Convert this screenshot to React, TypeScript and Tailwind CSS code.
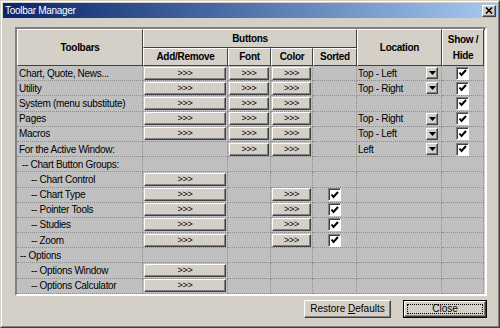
import React from 'react';

type Row = {
  name: string;
  pad: string;
  ar?: boolean;
  font?: boolean;
  color?: boolean;
  sorted?: boolean;
  loc?: string;
  show?: boolean;
};

const rows: Row[] = [
  { name: 'Chart, Quote, News...', pad: 'pl-[2px]', ar: true, font: true, color: true, loc: 'Top - Left', show: true },
  { name: 'Utility', pad: 'pl-[2px]', ar: true, font: true, color: true, loc: 'Top - Right', show: true },
  { name: 'System (menu substitute)', pad: 'pl-[2px]', ar: true, font: true, color: true, show: true },
  { name: 'Pages', pad: 'pl-[2px]', ar: true, font: true, color: true, loc: 'Top - Right', show: true },
  { name: 'Macros', pad: 'pl-[2px]', ar: true, font: true, color: true, loc: 'Top - Left', show: true },
  { name: 'For the Active Window:', pad: 'pl-[2px]', font: true, color: true, loc: 'Left', show: true },
  { name: '-- Chart Button Groups:', pad: 'pl-[5px]' },
  { name: '-- Chart Control', pad: 'pl-[14px]', ar: true },
  { name: '-- Chart Type', pad: 'pl-[14px]', ar: true, color: true, sorted: true },
  { name: '-- Pointer Tools', pad: 'pl-[14px]', ar: true, color: true, sorted: true },
  { name: '-- Studies', pad: 'pl-[14px]', ar: true, color: true, sorted: true },
  { name: '-- Zoom', pad: 'pl-[14px]', ar: true, color: true, sorted: true },
  { name: '-- Options', pad: 'pl-[3px]' },
  { name: '-- Options Window', pad: 'pl-[14px]', ar: true },
  { name: '-- Options Calculator', pad: 'pl-[14px]', ar: true },
];

const head =
  'flex items-center justify-center text-center bg-[#d4d0c8] border border-t-white border-l-white border-r-[#404040] border-b-[#404040] font-bold text-[10px] leading-[16px]';
const cell = 'flex items-center min-w-0 bg-[#c0c0c0] border-r border-b border-dotted border-[#8c8c8c]';
const raised =
  'bg-[#d4d0c8] border border-t-white border-l-white border-r-[#404040] border-b-[#404040] shadow-[inset_-1px_-1px_0_#808080]';

function Go() {
  return (
    <div className={`${raised} mx-px flex h-[13px] flex-1 items-center justify-center text-[9px] leading-none`}>
      &gt;&gt;&gt;
    </div>
  );
}

function Check() {
  return (
    <div className="mx-auto flex h-[13px] w-[13px] items-center justify-center border border-t-[#808080] border-l-[#808080] border-r-white border-b-white bg-white shadow-[inset_1px_1px_0_#404040]">
      <svg width="9" height="8" viewBox="0 0 9 8">
        <polyline points="1.5,3.5 3.5,6 8,1" fill="none" stroke="#000" strokeWidth="2" />
      </svg>
    </div>
  );
}

function Drop({ text }: { text: string }) {
  return (
    <>
      <span className="flex-1 truncate pl-[1px]">{text}</span>
      <div className={`${raised} mr-[3px] flex h-[12px] w-[12px] items-center justify-center`}>
        <svg width="7" height="4" viewBox="0 0 7 4">
          <polygon points="0,0 7,0 3.5,4" fill="#000" />
        </svg>
      </div>
    </>
  );
}

export default function App() {
  return (
    <div className="h-[328px] w-[500px] border border-t-[#d4d0c8] border-l-[#d4d0c8] border-r-[#404040] border-b-[#404040] bg-[#d4d0c8] font-['Liberation_Sans',Arial,sans-serif] text-black">
      <div className="flex h-full flex-col border border-t-white border-l-white border-r-[#808080] border-b-[#808080] p-px">
        {/* Title bar */}
        <div className="flex h-[15px] items-center justify-between bg-linear-to-r from-[#0a246a] to-[#a6caf0] pl-[2px] pr-[1px]">
          <span className="text-[10px] tracking-[-0.3px] text-white">Toolbar Manager</span>
          <div className={`${raised} flex h-[12px] w-[14px] items-center justify-center`}>
            <svg width="8" height="7" viewBox="0 0 8 7">
              <path d="M1 0.5 L7 6.5 M7 0.5 L1 6.5" stroke="#000" strokeWidth="1.6" />
            </svg>
          </div>
        </div>

        {/* Body */}
        <div className="flex flex-1 flex-col pl-[12px] pr-[10px] pt-[9px]">
          <div className="border-2 border-t-[#808080] border-l-[#808080] border-r-white border-b-white shadow-[inset_1px_1px_0_#404040,inset_-1px_-1px_0_#d4d0c8]">
            <div className="grid grid-cols-[126px_85px_43px_42px_44px_85px_42px] grid-rows-[19px_18px_repeat(15,15.2px)] text-[10px] tracking-[-0.3px]">
              <div className={`${head} row-span-2`}>Toolbars</div>
              <div className={`${head} col-span-4`}>Buttons</div>
              <div className={`${head} row-span-2`}>Location</div>
              <div className={`${head} row-span-2 leading-[12px]`}>
                Show /
                <br />
                Hide
              </div>
              <div className={head}>Add/Remove</div>
              <div className={head}>Font</div>
              <div className={head}>Color</div>
              <div className={head}>Sorted</div>

              {rows.map((r) => (
                <React.Fragment key={r.name}>
                  <div className={`${cell} ${r.pad} whitespace-nowrap`}>{r.name}</div>
                  <div className={cell}>{r.ar && <Go />}</div>
                  <div className={cell}>{r.font && <Go />}</div>
                  <div className={cell}>{r.color && <Go />}</div>
                  <div className={cell}>{r.sorted && <Check />}</div>
                  <div className={cell}>{r.loc && <Drop text={r.loc} />}</div>
                  <div className={cell}>{r.show && <Check />}</div>
                </React.Fragment>
              ))}
            </div>
          </div>

          {/* Footer buttons */}
          <div className="mt-[4px] flex justify-end gap-[12px] text-[10px]">
            <div className={`${raised} flex h-[18px] w-[87px] items-center justify-center`}>
              Restore&nbsp;<u>D</u>efaults
            </div>
            <div className="flex h-[18px] w-[84px] border border-black">
              <div className={`${raised} flex flex-1 p-[2px]`}>
                <div className="flex flex-1 items-center justify-center border border-dotted border-black leading-none">
                  Close
                </div>
              </div>
            </div>
          </div>
        </div>
      </div>
    </div>
  );
}
